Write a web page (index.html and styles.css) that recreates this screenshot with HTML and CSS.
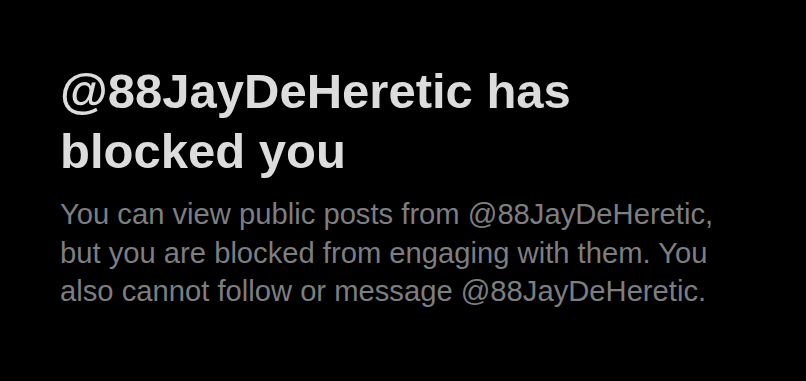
FILE: index.html
```html
<!DOCTYPE html>
<html>
<head>
<meta charset="utf-8">
<link rel="stylesheet" href="styles.css">
</head>
<body>
<main class="blocked">
  <h1 class="title">@88JayDeHeretic has blocked you</h1>
  <p class="desc">You can view public posts from @88JayDeHeretic, but you are blocked from engaging with them. You also cannot follow or message @88JayDeHeretic.</p>
</main>
</body>
</html>
```
FILE: styles.css
```css
html, body {
  margin: 0;
  padding: 0;
  background: #000;
  height: 100%;
}
.blocked {
  padding: 61px 60px 0 60px;
  width: 670px;
  font-family: "Liberation Sans", Arial, sans-serif;
}
.title {
  margin: 0;
  font-size: 49px;
  line-height: 60px;
  font-weight: 700;
  color: #dcdcdc;
}
.desc {
  margin: 14px 0 0;
  font-size: 29.2px;
  line-height: 38.5px;
  color: #7c7e81;
}
```
